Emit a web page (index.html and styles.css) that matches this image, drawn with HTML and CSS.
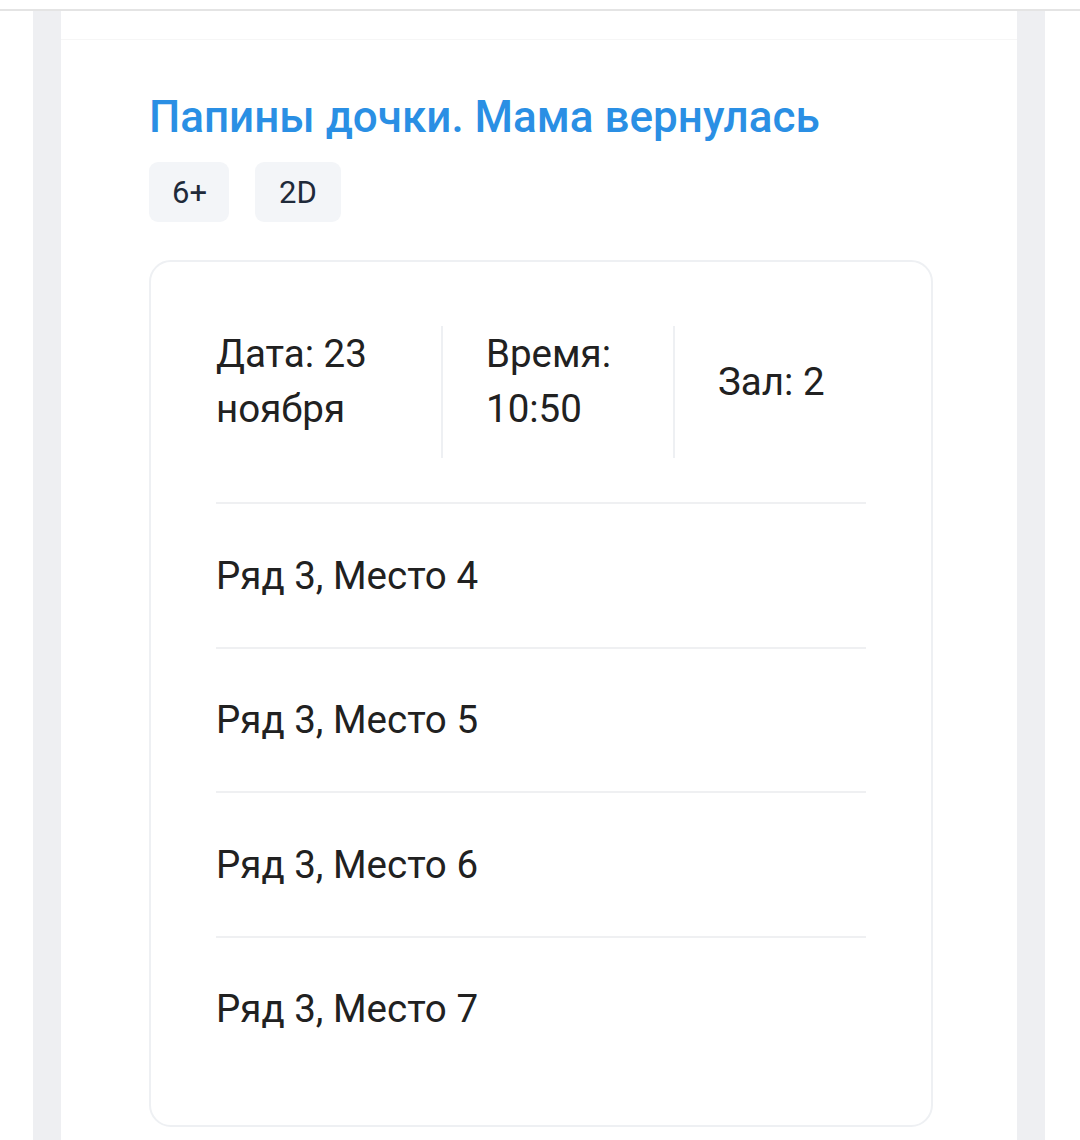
FILE: index.html
```html
<!DOCTYPE html>
<html lang="ru">
<head>
    <meta charset="UTF-8">
    <meta name="viewport" content="width=device-width, initial-scale=1.0">
    <title>Билеты</title>
    <link rel="stylesheet" href="styles.css">
</head>
<body>
    <div class="topbar"></div>
    <div class="shell">
        <div class="panel">
            <div class="panel-head"></div>
            <div class="content">
                <h1 class="movie-title">Папины дочки. Мама вернулась</h1>
                <div class="tags">
                    <span class="tag">6+</span>
                    <span class="tag">2D</span>
                </div>

                <div class="ticket">
                    <div class="info">
                        <div class="info-col">Дата: 23<br>ноября</div>
                        <div class="info-col">Время:<br>10:50</div>
                        <div class="info-col center">Зал: 2</div>
                    </div>
                    <div class="seat">Ряд 3, Место 4</div>
                    <div class="seat">Ряд 3, Место 5</div>
                    <div class="seat">Ряд 3, Место 6</div>
                    <div class="seat">Ряд 3, Место 7</div>
                </div>
            </div>
        </div>
    </div>
</body>
</html>
```

FILE: styles.css
```css
body {
    margin: 0;
    background: #fff;
    font-family: Roboto, "Noto Sans", sans-serif;
    color: #212121;
}
.topbar {
    height: 9px;
    border-bottom: 2px solid #e4e4e4;
}
.shell {
    margin: 0 35px 0 33px;
    padding: 0 28px;
    background: #eeeff2;
}
.panel {
    background: #fff;
    min-height: 1129px;
}
.panel-head {
    height: 28px;
    border-bottom: 1px solid #f6f6f6;
}
.content {
    padding: 50px 84px 0 88px;
}
.movie-title {
    margin: 0;
    font-size: 44px;
    font-weight: 500;
    line-height: 55px;
    color: #2a8fe4;
}
.tags {
    display: flex;
    gap: 26px;
    margin-top: 17px;
}
.tag {
    display: flex;
    align-items: center;
    justify-content: center;
    height: 60px;
    padding: 0 22px 0 23px;
    background: #f3f5f8;
    border-radius: 9px;
    font-size: 31px;
    color: #1f2a3a;
}
.tag + .tag {
    padding: 0 24px;
}
.ticket {
    margin-top: 38px;
    border: 2px solid #eef0f3;
    border-radius: 22px;
    padding: 64px 65px 45px;
}
.info {
    display: grid;
    grid-template-columns: 225px 232px 1fr;
    padding-bottom: 44px;
    border-bottom: 2px solid #eff0f2;
    font-size: 38.5px;
    line-height: 55px;
}
.info-col {
    padding-bottom: 22px;
}
.info-col + .info-col {
    border-left: 2px solid #eef0f3;
    padding-left: 43px;
}
.info-col.center {
    display: flex;
    align-items: center;
    height: 110px;
}
.seat {
    height: 142.5px;
    display: flex;
    align-items: center;
    font-size: 38.5px;
    border-bottom: 2px solid #eff0f2;
}
.seat:last-child {
    border-bottom: none;
}
```
